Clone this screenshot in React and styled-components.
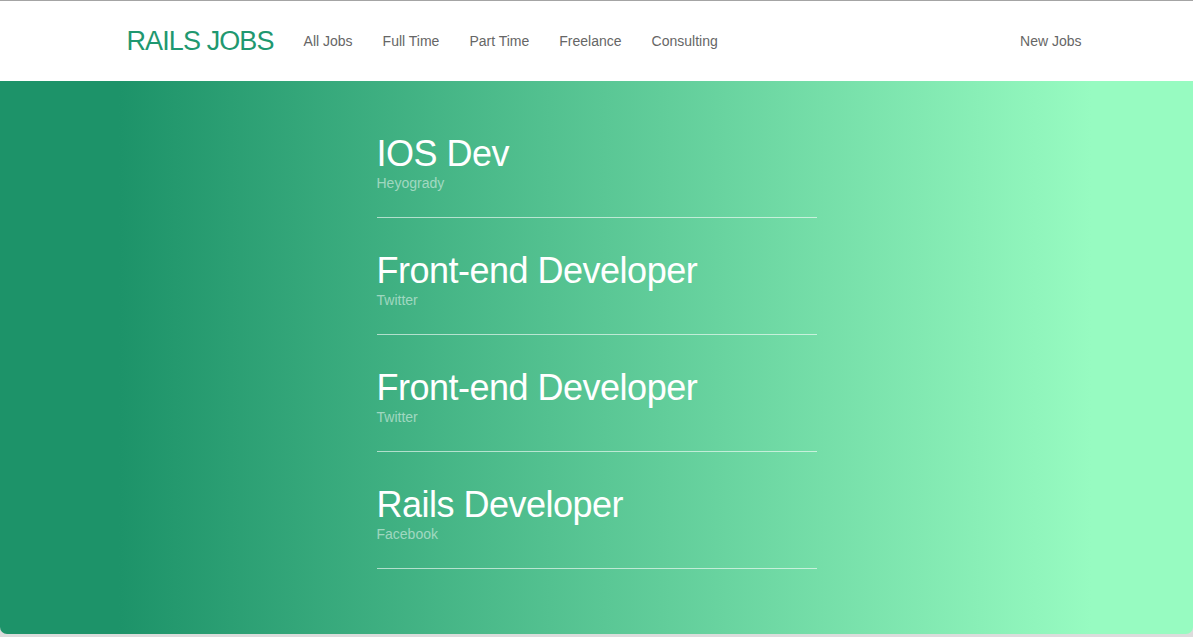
import React from 'react';
import styled, { createGlobalStyle } from 'styled-components';

const jobs = [
    { title: 'IOS Dev', company: 'Heyogrady' },
    { title: 'Front-end Developer', company: 'Twitter' },
    { title: 'Front-end Developer', company: 'Twitter' },
    { title: 'Rails Developer', company: 'Facebook' },
];

const links = ['All Jobs', 'Full Time', 'Part Time', 'Freelance', 'Consulting'];

const App = () => {
    return(
        <Page>
            <GlobalStyle/>
            <Navbar>
                <NavContainer>
                    <Brand href="#">RAILS JOBS</Brand>
                    <NavList>
                        {links.map(link => <NavLink key={link} href="#">{link}</NavLink>)}
                    </NavList>
                    <NavList $right>
                        <NavLink href="#">New Jobs</NavLink>
                    </NavList>
                </NavContainer>
            </Navbar>
            <Main>
                <JobList>
                    {jobs.map((job, i) => (
                        <JobItem key={i}>
                            <JobTitle>{job.title}</JobTitle>
                            <Company>{job.company}</Company>
                        </JobItem>
                    ))}
                </JobList>
            </Main>
            <Dock/>
        </Page>
    )
}

const GlobalStyle = createGlobalStyle`
    html, body {
        margin: 0;
        padding: 0;
        height: 100%;
        overflow: hidden;
    }
    body {
        font-family: "Liberation Sans", Arial, sans-serif;
        background-color: #dcdcdc;
    }
    #root {
        height: 100%;
    }
`;

const Page = styled.div`
    height: 100vh;
    display: flex;
    flex-direction: column;
`;

const Navbar = styled.nav`
    height: 80px;
    flex-shrink: 0;
    background-color: #FFFFFF;
    border-top: 1px solid #a4a4a4;
`;

const NavContainer = styled.div`
    width: 970px;
    height: 100%;
    margin: 0 auto;
    padding: 0 15px;
    box-sizing: border-box;
    display: flex;
    flex-direction: row;
    align-items: center;
`;

const Brand = styled.a`
    font-size: 27px;
    letter-spacing: -0.9px;
    color: #1f9870;
    text-decoration: none;
    padding-right: 15px;
    line-height: 30px;
`;

const NavList = styled.div`
    display: flex;
    flex-direction: row;
    margin-left: ${props => props.$right ? 'auto' : '0'};
    margin-right: ${props => props.$right ? '-30px' : '0'};
`;

const NavLink = styled.a`
    font-size: 14px;
    color: #666666;
    text-decoration: none;
    padding: 0 15px;
    line-height: 20px;
`;

const Main = styled.main`
    flex: 1;
    background: linear-gradient(to right, #1d9369 10%, #97fbc1 91.5%);
    border-radius: 0 0 7px 7px;
    padding-top: 20px;
`;

const JobList = styled.div`
    width: 440px;
    margin: 0 auto;
    display: flex;
    flex-direction: column;
`;

const JobItem = styled.div`
    padding: 34px 0 24px;
    border-bottom: 1px solid rgba(255, 255, 255, 0.6);
`;

const JobTitle = styled.div`
    font-size: 36px;
    letter-spacing: -0.5px;
    line-height: 38px;
    color: #FFFFFF;
`;

const Company = styled.div`
    font-size: 14px;
    line-height: 20px;
    color: rgba(255, 255, 255, 0.5);
`;

const Dock = styled.div`
    height: 3px;
    flex-shrink: 0;
    background-color: #dcdcdc;
`;

export default App
